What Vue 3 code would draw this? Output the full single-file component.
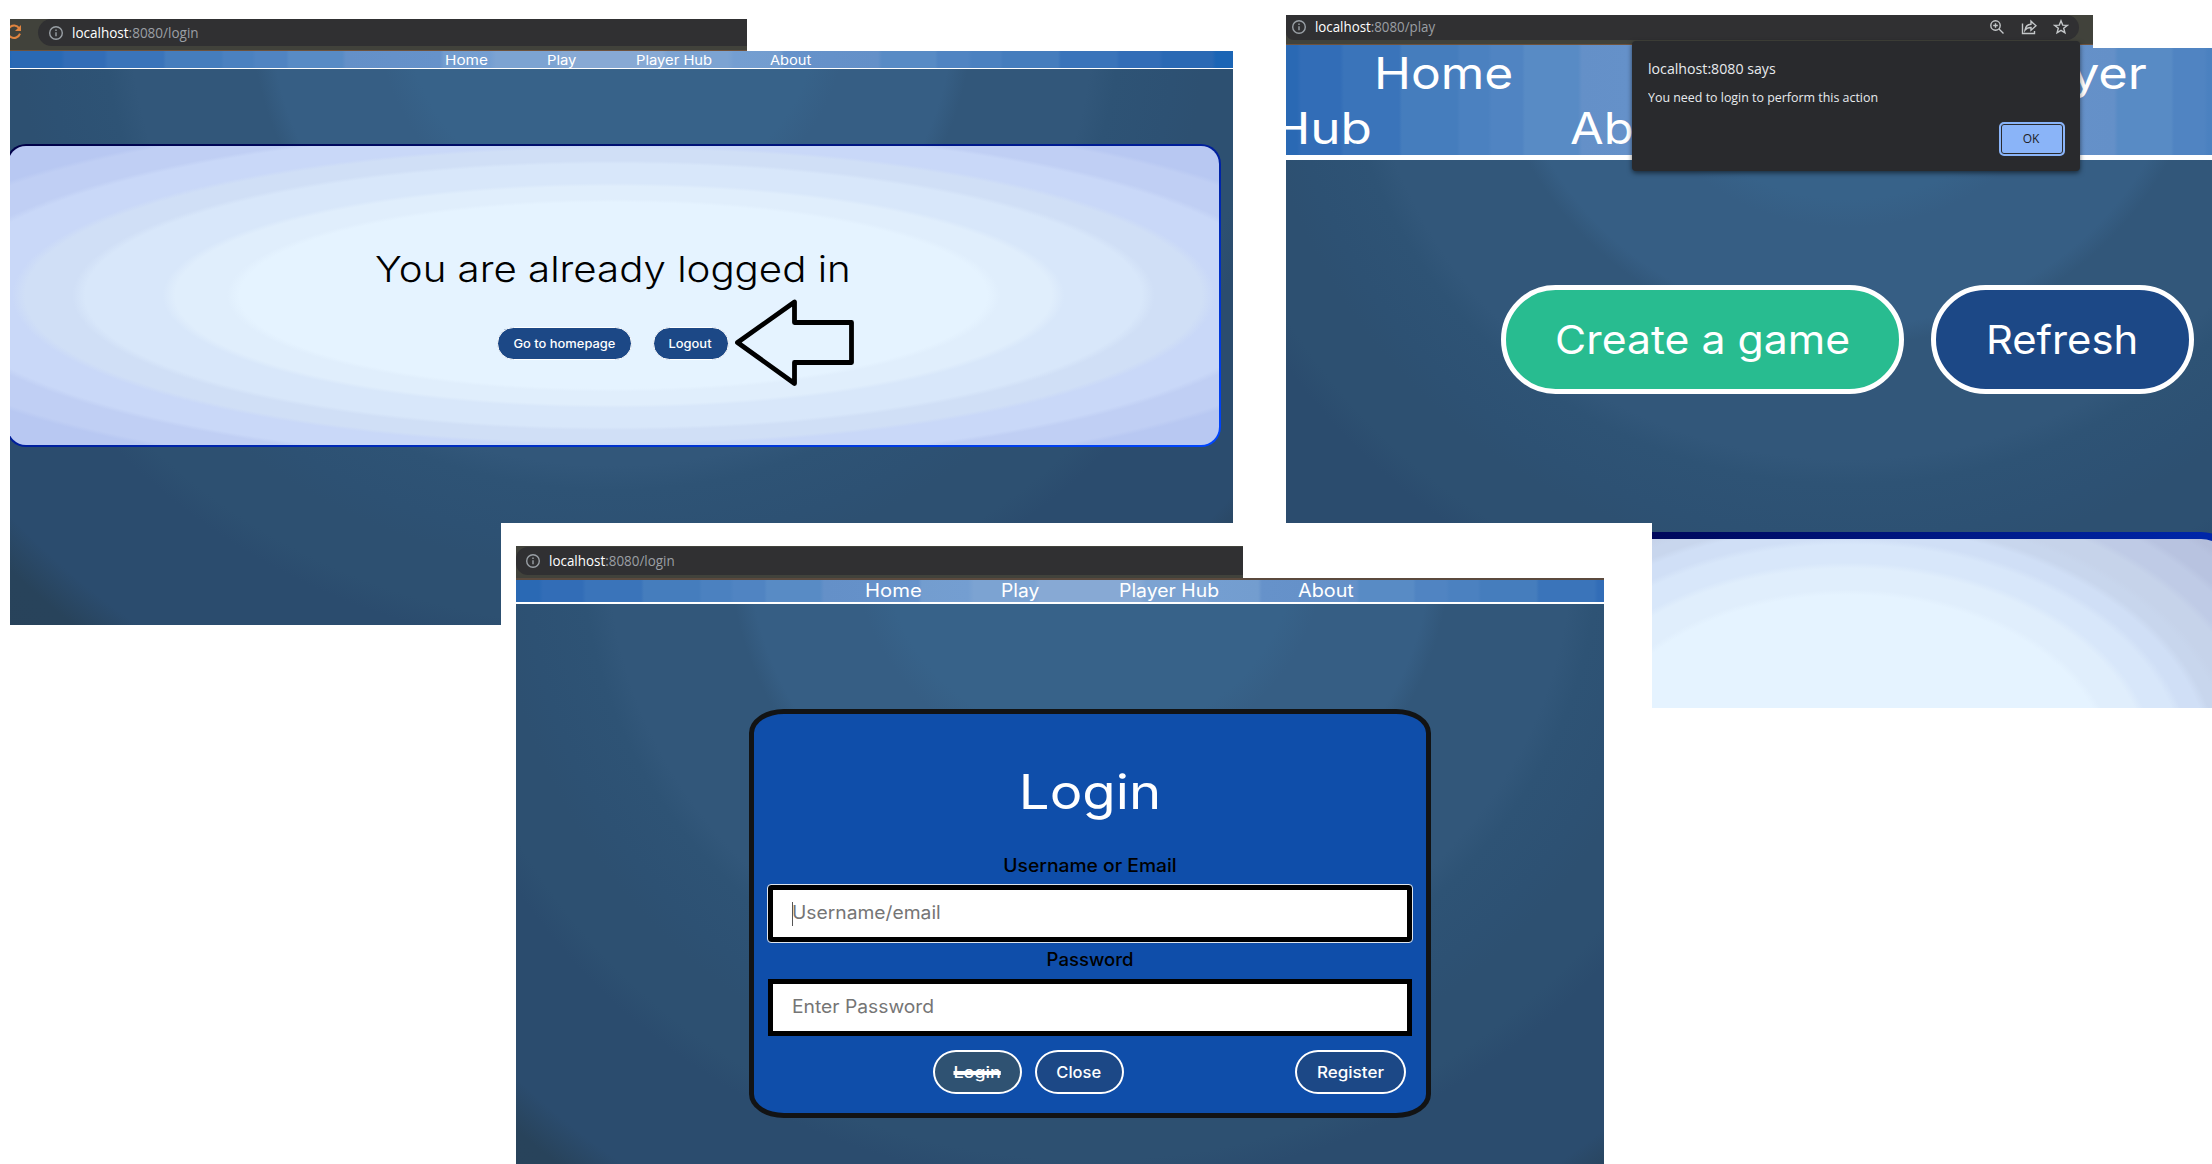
<script setup>
const loggedInNav = [
  { label: 'Home', step: 102, stretch: 1.178 },
  { label: 'Play', step: 88.5, stretch: 1.138 },
  { label: 'Player Hub', step: 134, stretch: 1.135 },
  { label: 'About', step: 60, stretch: 1.126 },
]
const loginNav = [
  { label: 'Home', step: 136, stretch: 1.125 },
  { label: 'Play', step: 118, stretch: 1.066 },
  { label: 'Player Hub', step: 179, stretch: 1.078 },
  { label: 'About', step: 80, stretch: 1.1 },
]
</script>

<template>
  <main class="board">
    <!-- Already logged in -->
    <section class="shot shot-session">
      <div class="bar">
        <div class="pill">
          <svg class="info" viewBox="0 0 16 16"><circle cx="8" cy="8" r="6.3" /><path d="M8 7.2v4M8 4.4v1.5" /></svg>
          <span class="url"><b>localhost</b>:8080/login</span>
        </div>
        <svg class="reload" viewBox="0 0 18 18"><path d="M14.2 5.2A6.2 6.2 0 1 0 15 10.6" /><path class="head" d="M16 2v6h-6z" /></svg>
      </div>
      <nav class="nav">
        <a v-for="l in loggedInNav" :key="l.label" :style="{ width: l.step + 'px' }"><span :style="{ transform: `scaleX(${l.stretch})` }">{{ l.label }}</span></a>
      </nav>
      <div class="page">
        <div class="card">
          <h1>You are already logged in</h1>
          <div class="actions">
            <button class="go"><span>Go to homepage</span></button>
            <button class="out"><span>Logout</span></button>
          </div>
        </div>
      </div>
      <svg class="arrow" viewBox="0 0 124 92"><path d="M4.5 45.5L61.5 5v20.500h57v40h-57V86.500z" /></svg>
    </section>

    <!-- Play page with alert -->
    <section class="shot shot-play">
      <div class="bar">
        <div class="pill">
          <svg class="info" viewBox="0 0 16 16"><circle cx="8" cy="8" r="6.3" /><path d="M8 7.2v4M8 4.4v1.5" /></svg>
          <span class="url"><b>localhost</b>:8080/play</span>
          <span class="tools">
            <svg viewBox="0 0 16 16"><circle cx="6.500" cy="6.500" r="4.700" /><path d="M10 10l4.500 4.500M6.500 4.200v4.600M4.200 6.500h4.600" /></svg>
            <svg viewBox="0 0 16 16"><path d="M1.500 4.500v10h12v-2.500M4 11.200c.5-4 2.800-5.800 6-6V2.200l5 4.600-5 4.400V8.500C7.500 8.500 5.500 9.200 4 11.200z" /></svg>
            <svg viewBox="0 0 16 16"><path d="M8 1.800l1.700 4.300 4.600.3-3.600 2.900 1.200 4.500L8 11.300l-3.900 2.500 1.200-4.500L1.700 6.400l4.600-.3z" /></svg>
          </span>
        </div>
      </div>
      <nav class="nav">
        <div class="row"><a class="home">Home</a><a class="player">Player</a></div>
        <div class="row"><a class="hub">Hub</a><a class="about">About</a></div>
      </nav>
      <div class="page">
        <div class="actions">
          <button class="create"><span>Create a game</span></button>
          <button class="refresh"><span>Refresh</span></button>
        </div>
        <div class="card"></div>
      </div>
      <div class="dialog">
        <p class="origin">localhost:8080 says</p>
        <p class="message">You need to login to perform this action</p>
        <button class="ok">OK</button>
      </div>
    </section>

    <!-- Login form -->
    <div class="sheet">
      <section class="shot shot-login">
        <div class="bar">
          <div class="pill">
            <svg class="info" viewBox="0 0 16 16"><circle cx="8" cy="8" r="6.3" /><path d="M8 7.2v4M8 4.4v1.5" /></svg>
            <span class="url"><b>localhost</b>:8080/login</span>
          </div>
        </div>
        <nav class="nav">
          <a v-for="l in loginNav" :key="l.label" :style="{ width: l.step + 'px' }"><span :style="{ transform: `scaleX(${l.stretch})` }">{{ l.label }}</span></a>
        </nav>
        <div class="page">
          <form class="form" @submit.prevent>
            <h2>Login</h2>
            <label class="l1">Username or Email</label>
            <div class="field focus"><i class="caret"></i><span>Username/email</span></div>
            <label class="l2">Password</label>
            <div class="field"><span>Enter Password</span></div>
            <div class="actions">
              <button class="login"><span>Login</span></button>
              <button class="close"><span>Close</span></button>
              <button class="register"><span>Register</span></button>
            </div>
          </form>
        </div>
      </section>
    </div>
  </main>
</template>

<style>
body { background: #fff; }
</style>

<style scoped>
* { box-sizing: border-box; }
.board {
  position: relative;
  width: 2212px;
  height: 1164px;
  overflow: hidden;
  background: #fff;
  font-family: "Inter", sans-serif;
}
.shot { position: absolute; overflow: hidden; display: flex; flex-direction: column; }
h1, h2, p { margin: 0; }
button {
  display: flex; align-items: center; justify-content: center;
  padding: 0; color: #fff; background: #1c4886; border: 1px solid #fff;
  font-family: "Inter", sans-serif; font-weight: 450; white-space: nowrap;
}

/* browser address bar */
.bar { flex: none; position: relative; background: #41423b; border-bottom: 1px solid #6e523c; }
.pill { display: flex; align-items: center; background: #303032; }
.info { width: 16px; height: 16px; flex: none; fill: none; stroke: #9aa0a6; stroke-width: 1.4; }
.url {
  font: 14px/20px "Open Sans", sans-serif; color: #9b9fa4; white-space: nowrap;
  transform: scaleX(.965); transform-origin: left;
}
.url b { font-weight: 400; color: #fff; }

/* banded navigation strip and page backdrop */
.nav {
  flex: none; display: flex; color: #fff; overflow: hidden; white-space: nowrap;
  background: linear-gradient(90deg,
    #1b65b5 calc(var(--c) - 604px), #2a69b4 calc(var(--c) - 600px),
    #2a69b4 calc(var(--c) - 551px), #326db7 calc(var(--c) - 547px),
    #326db7 calc(var(--c) - 508px), #3a74ba calc(var(--c) - 504px),
    #3a74ba calc(var(--c) - 449px), #457dbd calc(var(--c) - 446px),
    #457dbd calc(var(--c) - 391px), #4b81c0 calc(var(--c) - 388px),
    #4b81c0 calc(var(--c) - 360px), #5084c2 calc(var(--c) - 356px),
    #5084c2 calc(var(--c) - 326px), #588bc5 calc(var(--c) - 323px),
    #588bc5 calc(var(--c) - 270px), #6490c8 calc(var(--c) - 266px),
    #6692ca calc(var(--c) - 172px), #739dcf calc(var(--c) - 168px),
    #749ed1 calc(var(--c) - 122px), #7ca3d2 calc(var(--c) - 116px),
    #7ca3d2 calc(var(--c) - 56px), #87a9d4 calc(var(--c) - 50px),
    #87a9d4 calc(var(--c) + 50px), #7ca3d2 calc(var(--c) + 56px),
    #7ca3d2 calc(var(--c) + 116px), #749ed1 calc(var(--c) + 122px),
    #739dcf calc(var(--c) + 168px), #6692ca calc(var(--c) + 172px),
    #6490c8 calc(var(--c) + 266px), #588bc5 calc(var(--c) + 270px),
    #588bc5 calc(var(--c) + 323px), #5084c2 calc(var(--c) + 326px),
    #5084c2 calc(var(--c) + 356px), #4b81c0 calc(var(--c) + 360px),
    #4b81c0 calc(var(--c) + 388px), #457dbd calc(var(--c) + 391px),
    #457dbd calc(var(--c) + 446px), #3a74ba calc(var(--c) + 449px),
    #3a74ba calc(var(--c) + 504px), #326db7 calc(var(--c) + 508px),
    #326db7 calc(var(--c) + 547px), #2a69b4 calc(var(--c) + 551px),
    #2a69b4 calc(var(--c) + 600px), #1b65b5 calc(var(--c) + 604px));
}
.nav a { display: block; flex: none; }
.nav a span { display: inline-block; transform-origin: left; }
.page {
  flex: 1; min-height: 0;
  background: radial-gradient(ellipse 1000px 943px at var(--c) var(--top),
    #376289 20.6%, #365e84 23.6%, #365e84 34.1%, #32577a 36.1%,
    #32577a 48.2%, #2e5375 50.8%, #2d5173 56.5%, #2d5071 59.5%,
    #2d5071 65.2%, #2b4c6e 68%, #2b4c6e 80.5%, #28435b 84.5%, #28425a 100%);
}

/* already logged in */
.shot-session { left: 10px; top: 19px; width: 1223px; height: 606px; --c: 602px; --top: -58px; }
.shot-session .bar { width: 737px; height: 32px; }
.shot-session .pill { margin-left: 28px; height: 27px; border-radius: 14px 0 0 14px; padding-left: 10px; }
.shot-session .url { margin-left: 8px; }
.reload { position: absolute; left: -5px; top: 4px; width: 18px; height: 18px; fill: none; stroke: #e0843f; stroke-width: 2; }
.reload .head { fill: #e0843f; stroke: none; }
.shot-session .nav { height: 18px; padding-left: 435px; border-bottom: 1px solid #fff; font-size: 13px; line-height: 18px; background-clip: padding-box; }
.shot-session .card {
  display: flex; flex-direction: column; align-items: center;
  width: 1215px; height: 303px; margin: 75px 0 0 -4px; padding: 98px 2px 0 0;
  border: 2px solid transparent; border-radius: 20px;
  background:
    radial-gradient(ellipse 859px 214px at center,
      #e5f3ff 43.5%, #e0eefc 45%, #e0eefc 51%, #d8e7fa 52.5%, #d8e7fa 61.5%, #d0dff6 63%,
      #d0dff6 68.5%, #c9d8f8 70%, #c9d8f8 78%, #c0cff4 79.5%, #c0cff4 87%, #b8c8f2 88.5%) padding-box,
    linear-gradient(to bottom right, #000046, #001f9c 50%, #0046ff) border-box;
}
h1 { font-size: 36px; line-height: 50px; font-weight: 300; color: #000; transform: scaleX(1.117); white-space: nowrap; }
.shot-session .actions { display: flex; gap: 21px; margin-top: 33px; }
.shot-session button { height: 33px; border-radius: 17px; font-size: 12px; }
.shot-session button span { transform: scaleX(1.075); }
.go { width: 135px; }
.out { width: 76px; }
.arrow { position: absolute; left: 723px; top: 278px; width: 124px; height: 92px; fill: none; stroke: #000; stroke-width: 4.8; stroke-linejoin: round; }

/* play page */
.shot-play { left: 1286px; top: 15px; width: 926px; height: 693px; --c: 562px; --top: -155px; }
.shot-play .bar { width: 807px; height: 30px; }
.shot-play .pill { height: 25px; width: 793px; border-radius: 0 13px 13px 8px; padding-left: 5px; }
.shot-play .info { margin-top: -2px; }
.shot-play .url { margin: -2px 0 0 8px; transform: scaleX(.95); }
.tools { display: flex; gap: 16px; margin: -2px 10px 0 auto; }
.tools svg { width: 16px; height: 16px; fill: none; stroke: #c4c7c9; stroke-width: 1.4; }
.shot-play .nav { flex-direction: column; height: 115px; border-bottom: 5px solid #fff; padding-top: 1px; font-size: 44px; line-height: 55px; background-clip: padding-box; position: relative; }
.shot-play .nav::after { content: ""; position: absolute; left: 807px; right: 0; top: 0; height: 3px; background: #fff; }
.row { display: flex; height: 55px; }
.home { margin-left: 88px; transform: scaleX(1.13); transform-origin: left; }
.nav .player { margin: 0 65px 0 auto; transform: scaleX(1.15); transform-origin: right; }
.nav .hub { display: flex; justify-content: flex-end; width: 86px; transform: scaleX(1.165); transform-origin: right; }
.about { margin-left: 198px; transform: scaleX(1.11); transform-origin: left; }
.shot-play .page { padding-top: 125px; }
.shot-play .actions { display: flex; gap: 27px; margin-left: 215px; }
.shot-play .actions button { height: 109px; border: 5px solid #fff; border-radius: 55px; font-size: 39px; font-weight: 400; }
.shot-play .actions .create { width: 403px; background: #28bc90; }
.create span { transform: scaleX(1.096); }
.refresh { width: 263px; }
.refresh span { transform: scaleX(1.072); }
.shot-play .card {
  width: 786px; height: 474px; margin: 138px 0 0 169px;
  border: 7px solid transparent; border-radius: 40px;
  background:
    radial-gradient(ellipse 595px 397px at 386px 230px,
      #e5f3ff 43.8%, #e0eefc 45.2%, #e0eefc 50.5%, #d8e7fa 52%, #d8e7fa 56.5%, #d0dff6 58%,
      #d0dff6 61%, #c8d6ed 62.5%, #c8d6ed 64.5%, #c6d3ea 66%, #c6d3ea 70%, #bfcbe6 71.5%,
      #bfcbe6 75.5%, #b8c3e0 77%, #b8c3e0 81%, #b4bedb 82.5%) padding-box,
    linear-gradient(90deg, #000046, #00085c 25%, #0026a8 95%) border-box;
}
.dialog {
  position: absolute; left: 346px; top: 26px; width: 448px; height: 130px;
  display: flex; flex-direction: column; align-items: flex-start;
  padding: 17px 15px 0 16px; border-radius: 4px; background: #292a2d;
  box-shadow: 0 2px 5px rgba(0, 0, 0, .55);
  font-family: "Open Sans", sans-serif; color: #e8eaed; white-space: nowrap;
}
.origin { font-size: 15px; line-height: 20px; transform: scaleX(.945); transform-origin: left; }
.message { margin-top: 10px; font-size: 13px; line-height: 18px; transform: scaleX(.955); transform-origin: left; }
.dialog .ok {
  align-self: flex-end; width: 66px; height: 34px; margin-top: 16px; padding: 0 2px 1px 0;
  border: 2px solid #8ab4f8; border-radius: 5px; color: #202124; background: #8ab4f8;
  box-shadow: inset 0 0 0 1px #292a2d; font: 12px "Open Sans", sans-serif;
}

/* login form on its white sheet */
.sheet { position: absolute; left: 501px; top: 523px; width: 1151px; height: 641px; background: #fff; }
.shot-login { left: 15px; top: 23px; width: 1088px; height: 618px; --c: 574px; --top: -59px; }
.shot-login .bar { width: 727px; height: 32px; padding-top: 1px; border-bottom: 0; }
.shot-login .pill { height: 28px; border-radius: 12px 0 0 12px; padding-left: 9px; }
.shot-login .url { margin-left: 8px; transform: scaleX(.958); }
.shot-login .nav { height: 26px; padding-left: 349px; border-top: 2px solid #5b4a3e; border-bottom: 2px solid #fff; font-size: 18px; line-height: 22px; background-clip: padding-box; }
.form {
  width: 682.5px; height: 409px; margin: 105px 0 0 232.5px; padding: 47.5px 14.5px 0 14px;
  display: flex; flex-direction: column; background: #0f4eaa; border: 5px solid #121314; border-radius: 35px / 24px;
}
h2 { font-size: 48px; line-height: 60px; font-weight: 400; color: #fff; text-align: center; transform: scaleX(1.135); }
label { text-align: center; font-size: 18px; line-height: 22px; font-weight: 450; color: #000; }
.l1 { margin-top: 33px; transform: scaleX(1.07); transform-origin: center; }
.l2 { margin-top: 7px; transform: scaleX(1.03); }
.field {
  position: relative; height: 57px; padding-left: 19px; border: 5px solid #000;
  background: #fff; font-size: 18px; line-height: 46px; color: #757575; margin-top: 8px;
}
.field.focus { outline: 1.5px solid #dfe6ee; border-radius: 3px; }
.field.focus::before { content: ""; position: absolute; inset: 0; background: #fff; }
.field span { position: relative; display: inline-block; transform: scaleX(1.07); transform-origin: left; }
.caret { position: absolute; left: 19px; top: 12px; width: 1.500px; height: 24px; background: #555; }
.form .actions { display: flex; margin: 14px 0 0 165.5px; }
.form button { height: 44px; border-width: 2px; border-radius: 23px / 22px; font-size: 16px; }
.form .login { width: 89px; background: #2f5272; }
.login span { text-decoration: line-through; text-decoration-thickness: 4px; transform: scaleX(1.12); }
.close { width: 89px; margin-left: 12.5px; }
.close span { transform: scaleX(1.03); }
.register { width: 111px; margin-left: auto; margin-right: 6px; }
.register span { transform: scaleX(1.065); }
</style>
